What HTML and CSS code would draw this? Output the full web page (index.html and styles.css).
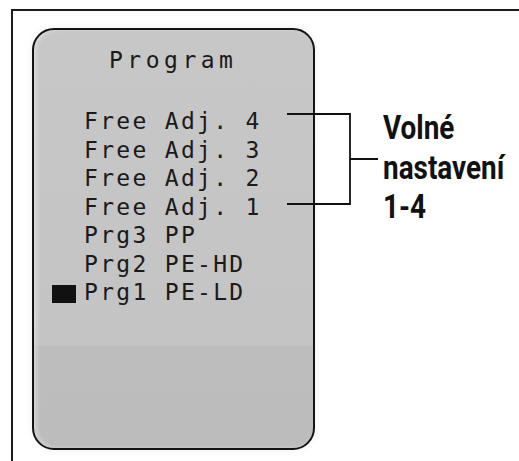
FILE: index.html
```html
<!DOCTYPE html>
<html lang="cs">
<head>
  <meta charset="UTF-8" />
  <title>Program</title>
  <link rel="stylesheet" href="styles.css">
</head>
<body>
  <div class="frame">
    <!-- Display of the machine -->
    <div class="panel">
      <div class="title">Program</div>
      <ul class="menu">
        <li><span class="mark"></span>Free Adj. 4</li>
        <li><span class="mark"></span>Free Adj. 3</li>
        <li><span class="mark"></span>Free Adj. 2</li>
        <li><span class="mark"></span>Free Adj. 1</li>
        <li><span class="mark"></span>Prg3 PP</li>
        <li><span class="mark"></span>Prg2 PE-HD</li>
        <li class="active"><span class="mark"></span>Prg1 PE-LD</li>
      </ul>
    </div>

    <!-- Callout -->
    <div class="note">
      <svg class="bracket" width="92" height="94" viewBox="0 0 92 94">
        <path d="M0 1H63V91H0M63 46H91" fill="none" stroke="#111" stroke-width="1.8"/>
      </svg>
      <p>Volné</p>
      <p>nastavení</p>
      <p>1-4</p>
    </div>
  </div>
</body>
</html>
```

FILE: styles.css
```css
* {
  box-sizing: border-box;
  margin: 0;
  padding: 0;
}
html, body {
  height: 100%;
  overflow: hidden;
  background: #fff;
}
.frame {
  display: flex;
  align-items: flex-start;
  margin: 9px 0 0 11px;
  padding: 17px 0 0 19px;
  border-top: 2px solid #1c1c1c;
  border-left: 2px solid #1c1c1c;
  height: calc(100% - 9px);
  width: calc(100% - 11px);
}
.panel {
  width: 283px;
  height: 422px;
  flex-shrink: 0;
  border: 2.5px solid #141414;
  border-radius: 22px;
  background: linear-gradient(#c7c7c7 0, #c4c4c4 315px, #bdbdbd 316px, #bcbcbc 100%);
  box-shadow: 0 0 8px rgba(0,0,0,0.06), inset 3px 0 4px rgba(255,255,255,0.35);
  font-family: "DejaVu Sans Mono", monospace;
  color: #1a1a1a;
}
.title {
  margin: 16px 0 0 75px;
  font-size: 23px;
  line-height: 28px;
  letter-spacing: 4.5px;
}
.menu {
  list-style: none;
  margin-top: 33px;
  padding-left: 18px;
  font-size: 23px;
  line-height: 28.5px;
  letter-spacing: 2.3px;
}
.menu li {
  display: flex;
  align-items: center;
  white-space: pre;
}
.mark {
  width: 24px;
  height: 18px;
  margin: 3px 8px 0 0;
  flex-shrink: 0;
}
.active .mark {
  background: #111;
}
.note {
  position: relative;
  flex-shrink: 0;
  margin: 80px 0 0 68px;
  font-family: Roboto, "Liberation Sans", sans-serif;
  font-weight: bold;
  font-size: 33px;
  line-height: 39.5px;
  color: #111;
}
.note p {
  transform: scaleX(0.845);
  transform-origin: left center;
  white-space: nowrap;
}
.bracket {
  position: absolute;
  left: -96px;
  top: 5px;
}
```
